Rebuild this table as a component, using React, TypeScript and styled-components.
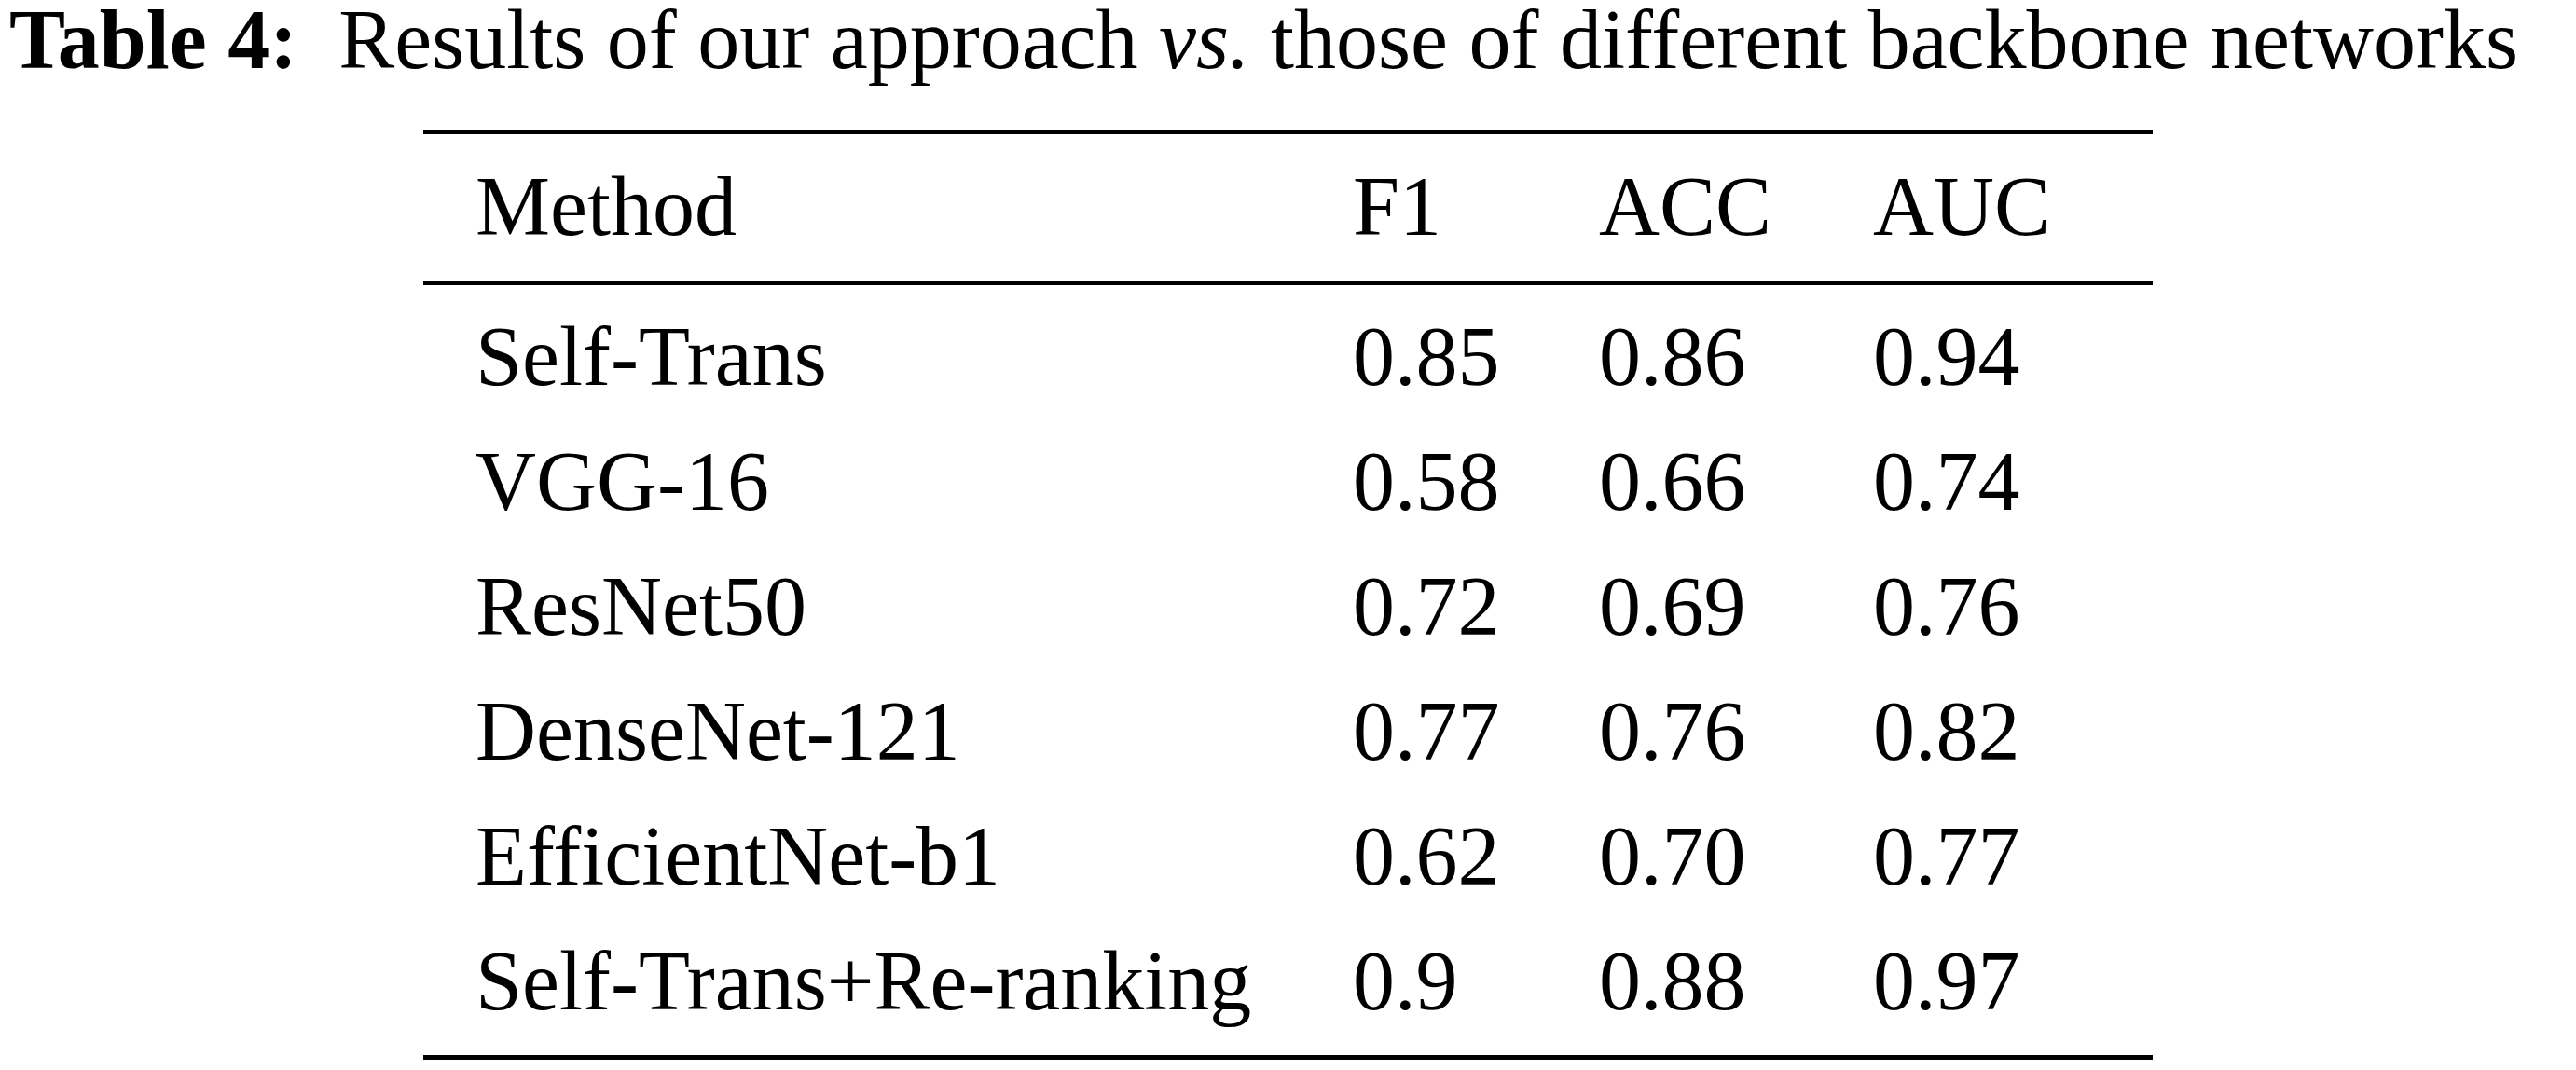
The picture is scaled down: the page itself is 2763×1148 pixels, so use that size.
import React from 'react';
import styled, { createGlobalStyle } from 'styled-components';

const GlobalStyle = createGlobalStyle`
  html, body {
    margin: 0;
    padding: 0;
    background: #ffffff;
  }

  body {
    font-family: "Liberation Serif", "Times New Roman", serif;
    color: #000000;
  }
`;

const Page = styled.div`
  width: 2763px;
  min-height: 1148px;
  background: #ffffff;
`;

const Caption = styled.div`
  font-size: 90px;
  line-height: 86px;
  padding-left: 10px;
  white-space: nowrap;
`;

const CaptionLabel = styled.span`
  font-weight: 700;
  margin-right: 44px;
`;

const Table = styled.div`
  width: 1855px;
  margin: 53px auto 0;
  border-top: 5px solid #000;
  border-bottom: 5px solid #000;
  font-size: 90px;
`;

const Section = styled.div<{ $padTop: number; $padBottom: number; $rule?: boolean }>`
  padding-top: ${props => props.$padTop}px;
  padding-bottom: ${props => props.$padBottom}px;
  border-bottom: ${props => (props.$rule ? '5px solid #000' : 'none')};
`;

const Row = styled.div`
  display: grid;
  grid-template-columns: 997px 264px 294px 1fr;
  height: 134px;
  line-height: 134px;
  white-space: nowrap;
`;

const Cell = styled.div<{ $first?: boolean }>`
  padding-left: ${props => (props.$first ? '56px' : '0')};
  text-align: left;
`;

const results = [
  { method: 'Self-Trans', f1: '0.85', acc: '0.86', auc: '0.94' },
  { method: 'VGG-16', f1: '0.58', acc: '0.66', auc: '0.74' },
  { method: 'ResNet50', f1: '0.72', acc: '0.69', auc: '0.76' },
  { method: 'DenseNet-121', f1: '0.77', acc: '0.76', auc: '0.82' },
  { method: 'EfficientNet-b1', f1: '0.62', acc: '0.70', auc: '0.77' },
  { method: 'Self-Trans+Re-ranking', f1: '0.9', acc: '0.88', auc: '0.97' },
];

const App: React.FC = () => {
  return (
    <Page>
      <GlobalStyle />
      <Caption>
        <CaptionLabel>Table 4:</CaptionLabel>
        Results of our approach <i>vs.</i> those of different backbone networks
      </Caption>

      <Table>
        <Section $padTop={11} $padBottom={12} $rule>
          <Row>
            <Cell $first>Method</Cell>
            <Cell>F1</Cell>
            <Cell>ACC</Cell>
            <Cell>AUC</Cell>
          </Row>
        </Section>

        <Section $padTop={10} $padBottom={12}>
          {results.map(r => (
            <Row key={r.method}>
              <Cell $first>{r.method}</Cell>
              <Cell>{r.f1}</Cell>
              <Cell>{r.acc}</Cell>
              <Cell>{r.auc}</Cell>
            </Row>
          ))}
        </Section>
      </Table>
    </Page>
  );
};

export default App;
